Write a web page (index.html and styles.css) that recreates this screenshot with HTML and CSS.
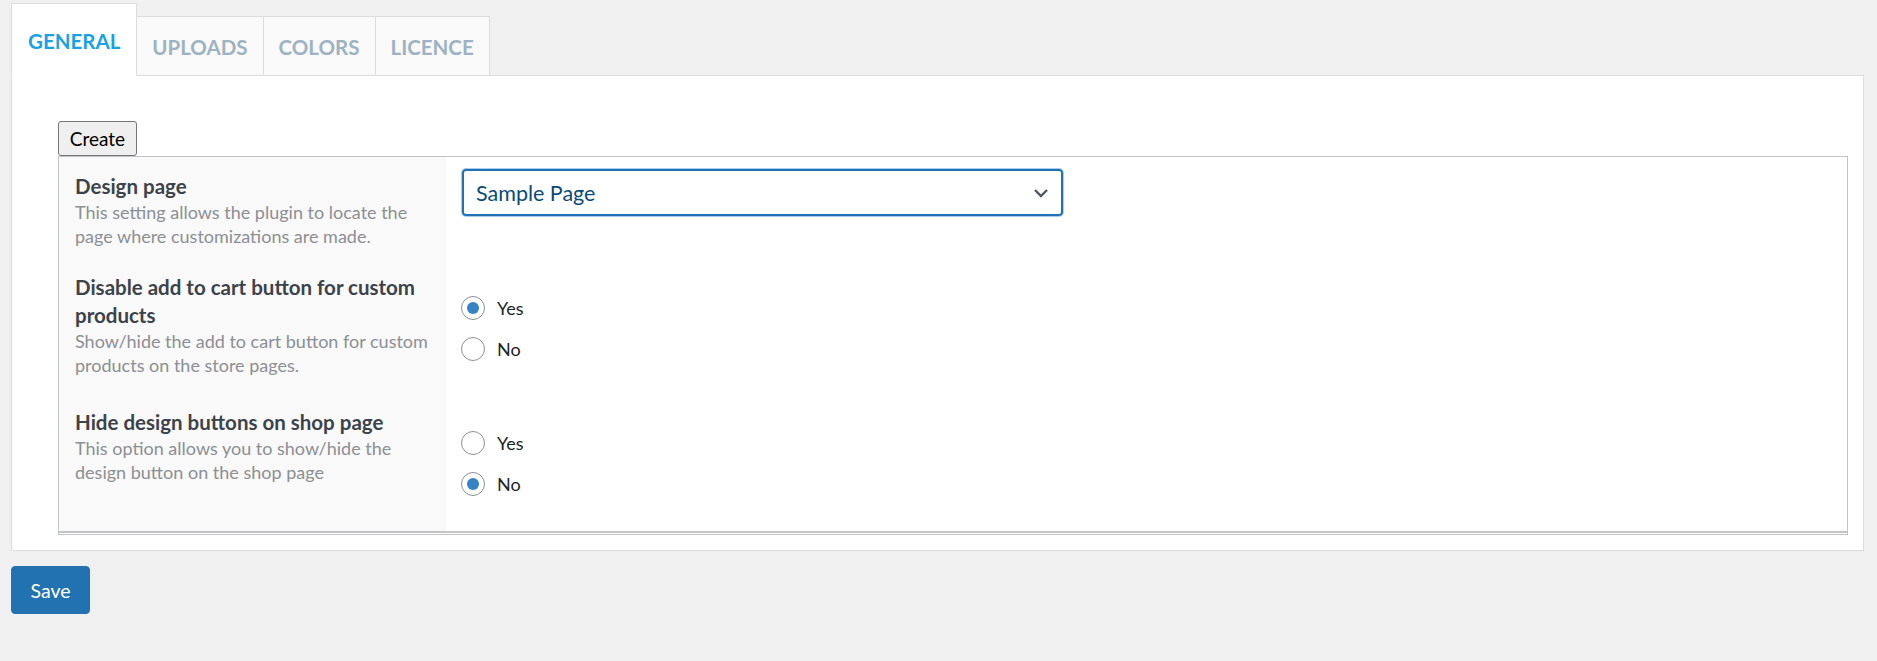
FILE: index.html
```html
<!DOCTYPE html>
<html lang="en">
<head>
<meta charset="utf-8">
<title>Settings</title>
<link rel="stylesheet" href="styles.css">
</head>
<body>
<div class="wrap">
  <nav class="tabs">
    <a class="tab tab-active" href="#">GENERAL</a>
    <a class="tab" href="#">UPLOADS</a>
    <a class="tab" href="#">COLORS</a>
    <a class="tab" href="#">LICENCE</a>
  </nav>
  <div class="panel">
    <button class="btn-create" type="button">Create</button>
    <div class="settings">
      <div class="rows">
        <div class="row row-first">
          <div class="th">
            <div class="label">Design page</div>
            <div class="desc">This setting allows the plugin to locate the page where customizations are made.</div>
          </div>
          <div class="td td-select">
            <div class="select">
              <span class="select-value">Sample Page</span>
              <svg class="chevron" width="16" height="10" viewBox="0 0 16 10"><polyline points="2,2 8,8 14,2" fill="none" stroke="#50575e" stroke-width="2.4"/></svg>
            </div>
          </div>
        </div>
        <div class="row">
          <div class="th">
            <div class="label">Disable add to cart button for custom products</div>
            <div class="desc">Show/hide the add to cart button for custom products on the store pages.</div>
          </div>
          <div class="td td-radios">
            <label class="radio"><span class="radio-dot checked"></span><span class="radio-text">Yes</span></label>
            <label class="radio"><span class="radio-dot"></span><span class="radio-text">No</span></label>
          </div>
        </div>
        <div class="row row-last">
          <div class="th">
            <div class="label">Hide design buttons on shop page</div>
            <div class="desc">This option allows you to show/hide the design button on the shop page</div>
          </div>
          <div class="td td-radios">
            <label class="radio"><span class="radio-dot"></span><span class="radio-text">Yes</span></label>
            <label class="radio"><span class="radio-dot checked"></span><span class="radio-text">No</span></label>
          </div>
        </div>
      </div>
    </div>
  </div>
  <button class="btn-save" type="button">Save</button>
</div>
</body>
</html>
```

FILE: styles.css
```css
* { box-sizing: border-box; }

body {
  margin: 0;
  background: #f0f0f1;
  font-family: "Lato", "Open Sans", sans-serif;
  color: #1d2327;
}

.wrap {
  padding: 3px 13px 0 11px;
}

.tabs {
  display: flex;
  align-items: flex-end;
  margin-bottom: -1px;
  position: relative;
  z-index: 1;
}

.tab {
  display: block;
  font-weight: 700;
  font-size: 20.5px;
  line-height: 30px;
  color: #9db2c2;
  background: #f9f9f9;
  border: 1px solid #dcdcde;
  padding: 15px 15px 13px;
  margin-left: -1px;
  text-decoration: none;
}

.tab-active {
  color: #19a1e6;
  background: #fff;
  border-bottom-color: #fff;
  padding: 22px 16px 19px;
  margin-left: 0;
}

.panel {
  background: #fff;
  border: 1px solid #dcdcde;
  padding: 45px 15px 15px 46px;
}

.btn-create {
  display: block;
  width: 79px;
  height: 35px;
  padding: 0;
  font-family: "Lato", "Open Sans", sans-serif;
  font-size: 19px;
  color: #000;
  background: #efefef;
  border: 1px solid #767676;
  border-radius: 3px;
}

.settings {
  border: 1px solid #c3c4c7;
}

.rows {
  border-bottom: 2px solid #c3c4c7;
  margin-bottom: 1px;
}

.row {
  display: flex;
}

.th {
  width: 387px;
  flex: none;
  background: #f9f9f9;
  padding: 12px 6px 12px 16px;
}

.row-first .th {
  padding-top: 15px;
  padding-bottom: 13px;
}

.label {
  font-size: 20.5px;
  font-weight: 700;
  line-height: 28px;
  color: #3c434a;
}

.desc {
  font-size: 18px;
  line-height: 24px;
  color: #8c8f94;
}

.td {
  flex: 1;
  background: #fff;
}

.td-select {
  padding: 12px 0 0 16px;
}

.select {
  width: 601px;
  height: 47px;
  border: 2px solid #2271b1;
  border-radius: 4px;
  box-shadow: 0 0 0 1px rgba(114, 174, 230, 0.6);
  display: flex;
  align-items: center;
  justify-content: space-between;
  padding: 0 12px 0 12px;
  font-size: 21.5px;
  color: #0a4b78;
}

.td-radios {
  padding: 26px 0 27px 15px;
}

.radio {
  display: flex;
  align-items: center;
  height: 41px;
  gap: 12px;
}

.radio-dot {
  width: 24px;
  height: 24px;
  border: 1px solid #8c8f94;
  border-radius: 50%;
  background: #fff;
  display: flex;
  align-items: center;
  justify-content: center;
}

.radio-dot.checked::after {
  content: "";
  width: 12px;
  height: 12px;
  border-radius: 50%;
  background: #3582c4;
}

.radio-text {
  font-size: 18px;
  color: #1d2327;
}

.btn-save {
  display: block;
  margin-top: 15px;
  width: 79px;
  height: 48px;
  padding: 0;
  font-family: "Lato", "Open Sans", sans-serif;
  font-size: 19.5px;
  color: #fff;
  background: #2271b1;
  border: 1px solid #2271b1;
  border-radius: 4px;
}
```
